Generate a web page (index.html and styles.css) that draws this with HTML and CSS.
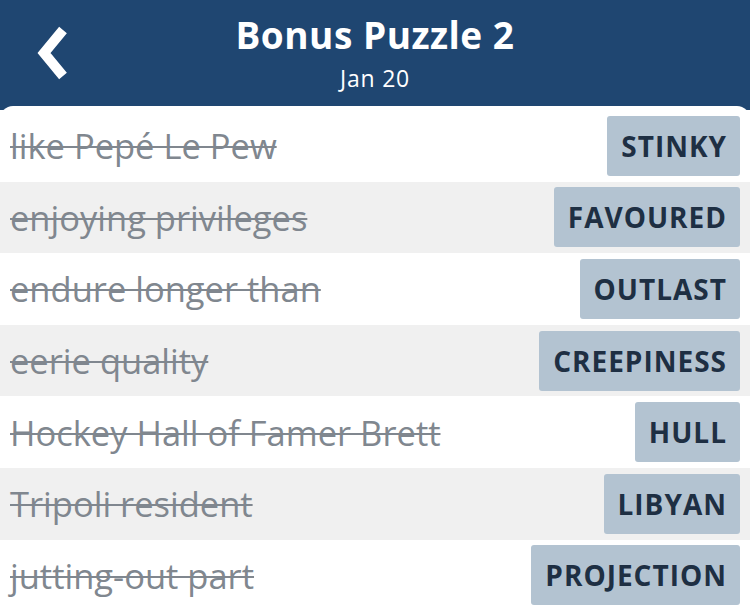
FILE: index.html
```html
<!DOCTYPE html>
<html>
<head>
<meta charset="utf-8">
<link rel="stylesheet" href="styles.css">
</head>
<body>
<div class="app">
  <header class="top">
    <button class="back" aria-label="Back">
      <svg width="38" height="58" viewBox="0 0 38 58"><path d="M29 6 L10 29 L29 52" fill="none" stroke="#fff" stroke-width="10" stroke-linecap="butt" stroke-linejoin="miter"/></svg>
    </button>
    <div class="titles">
      <h1>Bonus Puzzle 2</h1>
      <div class="date">Jan 20</div>
    </div>
  </header>
  <main class="panel">
    <div class="row"><span class="clue">like Pepé Le Pew</span><span class="word">STINKY</span></div>
    <div class="row alt"><span class="clue">enjoying privileges</span><span class="word">FAVOURED</span></div>
    <div class="row"><span class="clue">endure longer than</span><span class="word">OUTLAST</span></div>
    <div class="row alt"><span class="clue">eerie quality</span><span class="word">CREEPINESS</span></div>
    <div class="row"><span class="clue">Hockey Hall of Famer Brett</span><span class="word">HULL</span></div>
    <div class="row alt"><span class="clue">Tripoli resident</span><span class="word">LIBYAN</span></div>
    <div class="row"><span class="clue">jutting-out part</span><span class="word">PROJECTION</span></div>
  </main>
</div>
</body>
</html>
```
FILE: styles.css
```css
* { box-sizing: border-box; }
html, body { margin: 0; padding: 0; }
body {
  font-family: "Open Sans", "Noto Sans", sans-serif;
  background: #1f4671;
  width: 750px;
  height: 611px;
  overflow: hidden;
}
.app { display: flex; flex-direction: column; height: 611px; }
.top {
  height: 106px;
  flex: none;
  position: relative;
  color: #fff;
}
.back {
  position: absolute;
  left: 34px;
  top: 24px;
  background: none;
  border: 0;
  padding: 0;
  display: block;
}
.back svg { display: block; }
.titles { text-align: center; padding-top: 13px; }
h1 {
  margin: 0;
  font-size: 37px;
  font-weight: 700;
  line-height: 44px;
  letter-spacing: 0.5px;
}
.date {
  font-size: 23px;
  line-height: 28px;
  margin-top: 7px;
  letter-spacing: 0.8px;
}
.panel {
  flex: 1;
  background: #fff;
  border-radius: 13px 13px 0 0;
  padding-top: 4px;
  display: flex;
  flex-direction: column;
}
.row {
  height: 71.6px;
  flex: none;
  display: flex;
  align-items: center;
  justify-content: space-between;
  padding: 0 10px 0 10px;
  background: #fff;
}
.row.alt { background: #f0f0f0; }
.clue {
  font-size: 34.5px;
  color: #80878f;
  text-decoration: line-through;
  text-decoration-thickness: 2px;
  white-space: nowrap;
}
.word {
  background: #b3c3d1;
  color: #1e2f43;
  font-weight: 700;
  font-size: 28px;
  letter-spacing: 1px;
  height: 60px;
  line-height: 60px;
  padding: 0 13px 0 14px;
  border-radius: 3px;
}
```
